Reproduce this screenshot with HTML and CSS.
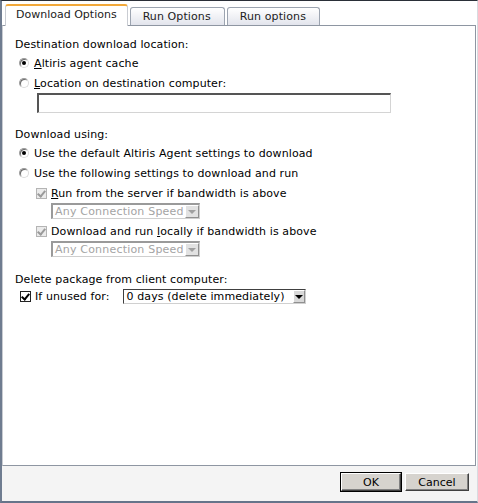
FILE: index.html
```html
<!DOCTYPE html>
<html>
<head>
<meta charset="utf-8">
<link rel="stylesheet" href="styles.css">
</head>
<body>
<div class="window">
  <div class="tabs">
    <div class="tab active">Download Options</div>
    <div class="tab">Run Options</div>
    <div class="tab">Run options</div>
  </div>
  <div class="panel">
    <div class="group">
      <div class="label">Destination download location:</div>
      <div class="row ind1"><span class="radio on"></span><span><u>A</u>ltiris agent cache</span></div>
      <div class="row ind1"><span class="radio"></span><span><u>L</u>ocation on destination computer:</span></div>
      <div class="textbox"></div>
    </div>
    <div class="group g2">
      <div class="label">Download using:</div>
      <div class="row ind1"><span class="radio on"></span><span>Use the default Altiris Agent settings to download</span></div>
      <div class="row ind1"><span class="radio"></span><span>Use the following settings to download and run</span></div>
      <div class="row ind2"><span class="check dis"></span><span><u>R</u>un from the server if bandwidth is above</span></div>
      <div class="select dis"><span class="val">Any Connection Speed</span><span class="arrow"></span></div>
      <div class="row ind2 r2"><span class="check dis"></span><span>Download and run <u>l</u>ocally if bandwidth is above</span></div>
      <div class="select dis"><span class="val">Any Connection Speed</span><span class="arrow"></span></div>
    </div>
    <div class="group g3">
      <div class="label">Delete package from client computer:</div>
      <div class="row unused"><span class="check on"></span><span class="ulabel">If unused for:</span>
        <div class="select en"><span class="val">0 days (delete immediately)</span><span class="arrow"></span></div>
      </div>
    </div>
  </div>
  <div class="footer">
    <button class="btn ok">OK</button>
    <button class="btn cancel">Cancel</button>
  </div>
</div>
</body>
</html>
```
FILE: styles.css
```css
* { box-sizing: border-box; }
html, body { margin: 0; padding: 0; background: #fff; }
body {
  font-family: "DejaVu Sans", Verdana, sans-serif;
  font-size: 11px;
  color: #000;
}
.window {
  width: 478px;
  height: 503px;
  border-top: 1px solid #2a2f38;
  border-left: 2px solid #6f7c90;
  border-right: 1px solid #d8dbe0;
  border-bottom: 2px solid #66748a;
  display: flex;
  flex-direction: column;
  background: #fff;
}
.tabs {
  height: 24px;
  flex: none;
  display: flex;
  align-items: flex-end;
  padding-left: 3px;
  gap: 2px;
}
.tab {
  height: 18px;
  padding: 0 13px 0 12px;
  border: 1px solid #9ca4b0;
  border-bottom: none;
  border-radius: 3px 3px 0 0;
  background: linear-gradient(#ffffff, #e2e4ec);
  line-height: 18px;
  color: #222;
  font-size: 11px;
  letter-spacing: 0.1px;
}
.tab.active {
  position: relative;
  z-index: 1;
  height: 22px;
  margin-bottom: -1px;
  background: #fff;
  border-top: 2px solid #f2a93b;
  border-left: 1px solid #c9ccd2;
  border-right: 1px solid #c9ccd2;
  padding: 0 10px;
  line-height: 17px;
  letter-spacing: 0;
}
.panel {
  flex: none;
  height: 441px;
  border: 1px solid #8e96a2;
  margin-right: 1px;
  border-left-color: #c9ccd2;
  padding: 10px 0 0 12px;
  letter-spacing: 0.1px;
}
.label { height: 17px; line-height: 17px; }
.row { display: flex; align-items: center; height: 20px; }
.ind1 { padding-left: 4px; }
.ind2 { padding-left: 21px; }
.radio {
  flex: none;
  width: 10px; height: 10px;
  border-radius: 50%;
  border: 1px solid #9a9a9a;
  border-right-color: #dcdcdc;
  border-bottom-color: #dcdcdc;
  background: #fff;
  margin-right: 5px;
  position: relative;
  box-shadow: inset 1px 1px 0 #6a6a6a;
}
.radio.on::after {
  content: "";
  position: absolute;
  left: 2px; top: 2px;
  width: 4px; height: 4px;
  border-radius: 50%;
  background: #000;
}
.textbox {
  margin-left: 22px;
  width: 354px;
  height: 20px;
  border: 1px solid #d4d4d4;
  border-top: 2px solid #555;
  border-left: 2px solid #555;
  background: #fff;
}
.g2 { margin-top: 13px; }
.g3 { margin-top: 14px; }
.check {
  flex: none;
  width: 11px; height: 11px;
  border: 1px solid #222;
  background: #fff;
  margin-right: 4px;
  position: relative;
}
.check::after {
  content: "";
  position: absolute;
  left: 2px; top: 0px;
  width: 3px; height: 6px;
  border-right: 2px solid #000;
  border-bottom: 2px solid #000;
  transform: rotate(40deg);
}
.check.dis {
  border-color: #b4b4b4;
  background: #ebebeb;
}
.check.dis::after { border-color: #9a9a9a; }
.select {
  display: flex;
  align-items: stretch;
  height: 16px;
  letter-spacing: 0.2px;
}
.select.dis {
  margin-left: 36px;
  width: 149px;
  border: 1px solid #cfcfcf;
  border-top: 2px solid #9a9a9a;
  border-left: 2px solid #9a9a9a;
  color: #a4a4a4;
}
.r2 { margin-top: 2px; }
.select .val {
  flex: 1;
  line-height: 13px;
  padding-left: 2px;
  white-space: nowrap;
  overflow: hidden;
}
.select .arrow {
  flex: none;
  width: 14px;
  background: #e2e2e2;
  border: 1px solid #fff;
  border-right-color: #909090;
  border-bottom-color: #909090;
  position: relative;
}
.select .arrow::after {
  content: "";
  position: absolute;
  left: 2px; top: 4px;
  border-left: 4px solid transparent;
  border-right: 4px solid transparent;
  border-top: 4px solid #a0a0a0;
}
.unused { height: 16px; padding-left: 5px; margin-top: 0; }
.ulabel { margin-right: 13px; }
.select.en {
  width: 183px;
  height: 15px;
  border: 1px solid #d0d0d0;
  border-top: 1px solid #404040;
  border-left: 1px solid #404040;
  color: #000;
  letter-spacing: 0.1px;
}
.select.en .val { line-height: 13px; padding-left: 3px; }
.select.en .arrow { width: 12px; background: #d8d8d8; }
.select.en .arrow::after { left: 1px; border-top-color: #000; }
.footer {
  flex: 1;
  background: #f4f4f4;
  display: flex;
  justify-content: flex-end;
  align-items: flex-start;
  padding: 7px 8px 0 0;
  gap: 4px;
}
.btn {
  font-family: "DejaVu Sans", Verdana, sans-serif;
  font-size: 11px;
  color: #000;
  height: 18px;
  padding: 0;
  background: #d6d3ce;
  border: 1px solid #fff;
  border-right-color: #404040;
  border-bottom-color: #404040;
  box-shadow: inset -1px -1px 0 #808080;
}
.btn.ok { width: 60px; outline: 1px solid #000; }
.btn.cancel { width: 64px; }
```
